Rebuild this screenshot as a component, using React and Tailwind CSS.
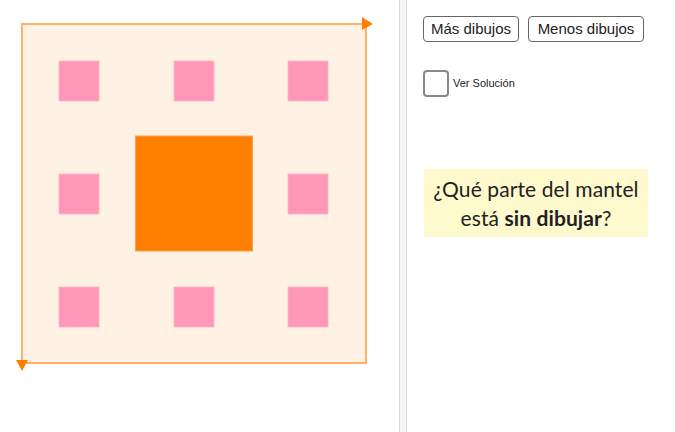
import React from "react";

const pinks = [
  [59, 61], [174, 61], [288, 61],
  [59, 174], [288, 174],
  [59, 287], [174, 287], [288, 287],
];

const Mantel = () => (
  <svg width="399" height="432" className="block shrink-0">
    <rect x="22" y="24" width="344" height="339" fill="#fff2e5" />
    {pinks.map(([x, y]) => (
      <rect key={x + "-" + y} x={x} y={y} width="40" height="40" fill="#ff98b7" stroke="#ffb3c9" strokeWidth="0.8" />
    ))}
    <rect x="135.5" y="136" width="117" height="115" fill="#ff8000" stroke="#ffa04d" strokeWidth="1" />
    <polyline points="22,360 22,24 362,24" fill="none" stroke="#ffb266" strokeWidth="2" />
    <polyline points="366,24 366,363 22,363" fill="none" stroke="#ffb266" strokeWidth="2" />
    <polygon points="362,17 373,24 362,30" fill="#ff8000" />
    <polygon points="16,360 28,360 22,371" fill="#ff8000" />
  </svg>
);

export default function App() {
  return (
    <div className="flex h-[432px] w-[675px] overflow-hidden bg-white font-['Liberation_Sans',Arial,sans-serif]">
      <Mantel />
      <div className="h-full w-[8px] shrink-0 border-x border-[#dcdcdc] bg-[#f5f5f5]" />
      <div className="flex flex-1 flex-col pl-[16px] pt-[16px]">
        <div className="flex gap-[9px]">
          <button className="h-[26px] w-[96px] rounded-[4px] border border-[#666] bg-white text-[15px] text-[#222]">
            Más dibujos
          </button>
          <button className="h-[26px] w-[116px] rounded-[4px] border border-[#666] bg-white text-[15px] text-[#222]">
            Menos dibujos
          </button>
        </div>
        <div className="mt-[28px] flex items-center gap-[4px]">
          <div className="h-[27px] w-[26px] rounded-[4px] border-2 border-[#888] bg-white" />
          <span className="text-[11px] text-[#222]">Ver Solución</span>
        </div>
        <div className="ml-[1px] mt-[72px] flex h-[68px] w-[224px] flex-col items-center justify-center bg-[#fffacd] text-[21px] leading-[29px] text-[#222] font-['Lato',sans-serif]">
          <span className="tracking-[0.1px]">¿Qué parte del mantel</span>
          <span className="tracking-[0.1px]">
            está <b>sin dibujar</b>?
          </span>
        </div>
      </div>
    </div>
  );
}
